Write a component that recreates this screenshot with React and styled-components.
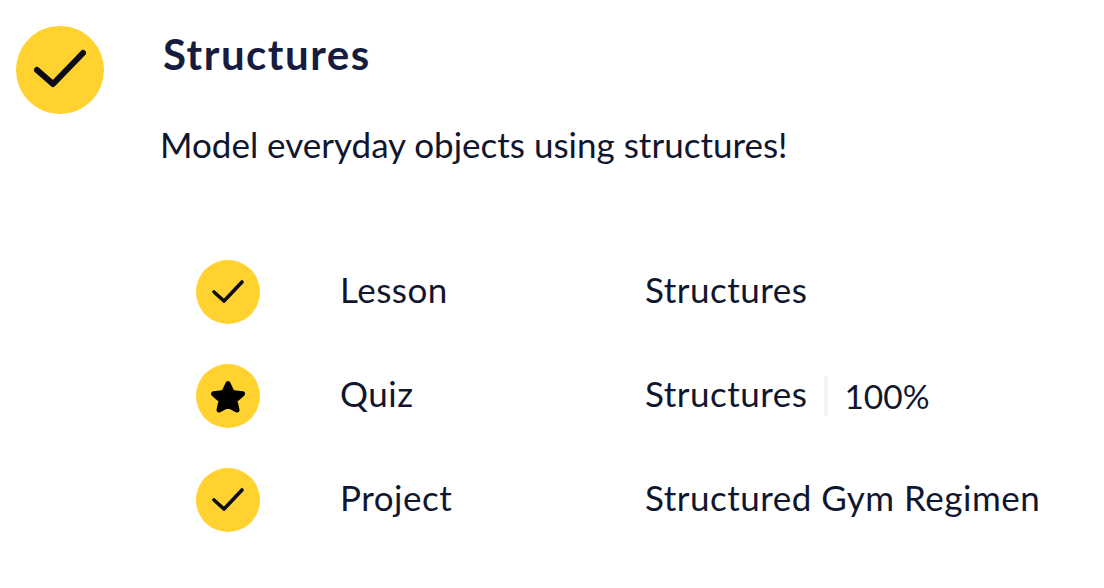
import React from 'react'
import styled, { createGlobalStyle } from 'styled-components'

const GlobalStyle = createGlobalStyle`
  body {
    margin: 0;
    background: #fff;
    font-family: "Lato", "Liberation Sans", sans-serif;
    color: #10162f;
  }
`

const Page = styled.div`
  width: 1104px;
  height: 588px;
  overflow: hidden;
  padding: 26px 0 0 16px;
  box-sizing: border-box;
`

const Header = styled.div`
  display: flex;
  align-items: flex-start;
  gap: 59px;
`

const Badge = styled.div`
  flex: none;
  width: ${(props) => props.size}px;
  height: ${(props) => props.size}px;
  border-radius: 50%;
  background: #ffd22f;
  display: flex;
  align-items: center;
  justify-content: center;
`

const HeaderText = styled.div`
  display: flex;
  flex-direction: column;
`

const Title = styled.h1`
  margin: 3px 0 0;
  font-size: 42px;
  line-height: 50px;
  font-weight: 700;
  letter-spacing: 1.5px;
  color: #151c3d;
`

const Description = styled.p`
  margin: 44px 0 0 -3px;
  font-size: 35px;
  line-height: 42px;
  font-weight: 400;
`

const Rows = styled.div`
  display: flex;
  flex-direction: column;
  gap: 40px;
  margin: 95px 0 0 180px;
`

const Row = styled.div`
  display: flex;
  align-items: center;
  height: 64px;
`

const Label = styled.div`
  width: 304px;
  margin-left: 80px;
  padding-bottom: 6px;
  font-size: 35px;
  letter-spacing: 0.5px;
`

const Value = styled.div`
  display: flex;
  align-items: center;
  margin-left: 1px;
  font-size: 35px;
  letter-spacing: 0.5px;
`

const ValueText = styled.span`
  padding-bottom: 6px;
`

const Score = styled.span`
  margin-left: 17px;
  padding-left: 16px;
  border-left: 4px solid #f3f4f8;
  height: 40px;
  font-size: 33.5px;
  line-height: 40px;
  letter-spacing: 0;
`

const Check = ({ size, d, width }) => (
  <svg width={size} height={size} viewBox={`0 0 ${size} ${size}`} fill="none">
    <path d={d} stroke="#0b0c18" strokeWidth={width} strokeLinecap="round" strokeLinejoin="round" />
  </svg>
)

const SmallCheck = () => <Check size={64} d="M18 32 L28 41 L46 22" width={3.6} />

const Star = () => (
  <svg width="64" height="64" viewBox="0 0 64 64">
    <path
      d="M32 19.5 L36.2 28.6 L46.5 29.8 L39 36.5 L41 46 L32 41.2 L23 46 L25 36.5 L17.5 29.8 L27.8 28.6 Z"
      fill="#000"
      stroke="#000"
      strokeWidth="5"
      strokeLinejoin="round"
    />
  </svg>
)

const rows = [
  { label: 'Lesson', value: 'Structures', icon: <SmallCheck /> },
  { label: 'Quiz', value: 'Structures', score: '100%', icon: <Star /> },
  { label: 'Project', value: 'Structured Gym Regimen', icon: <SmallCheck /> },
]

const App = () => (
  <Page>
    <GlobalStyle />
    <Header>
      <Badge size={88}>
        <Check size={88} d="M21 44 L37 58 L67 27" width={6} />
      </Badge>
      <HeaderText>
        <Title>Structures</Title>
        <Description>Model everyday objects using structures!</Description>
      </HeaderText>
    </Header>
    <Rows>
      {rows.map((row) => (
        <Row key={row.label}>
          <Badge size={64}>{row.icon}</Badge>
          <Label>{row.label}</Label>
          <Value>
            <ValueText>{row.value}</ValueText>
            {row.score && <Score>{row.score}</Score>}
          </Value>
        </Row>
      ))}
    </Rows>
  </Page>
)

export default App
